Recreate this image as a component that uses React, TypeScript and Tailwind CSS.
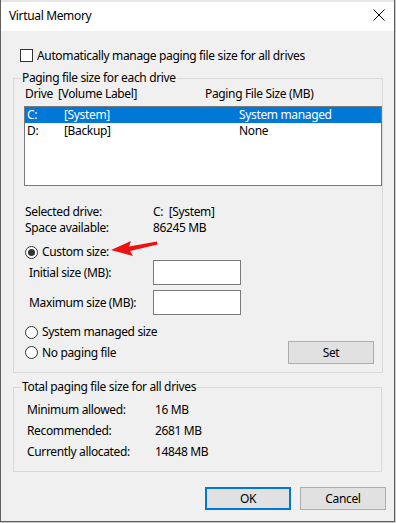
import React from "react";

const font = { fontFamily: '"Noto Sans", "Open Sans", sans-serif' };

function Radio({ checked }: { checked?: boolean }) {
  return (
    <span className="flex h-[13px] w-[13px] shrink-0 items-center justify-center rounded-full border border-[#333333] bg-white">
      {checked && <span className="h-[7px] w-[7px] rounded-full bg-[#333333]" />}
    </span>
  );
}

export default function App() {
  return (
    <div
      className="relative h-[523px] w-[396px] bg-[#c8c8c8] text-[12px] leading-[16px] tracking-[-0.35px] text-black"
      style={font}
    >
      <div className="flex h-[522px] w-[395px] flex-col border-x border-b border-[#5f5f5f] bg-[#f0f0f0]">
        <div className="h-[2px] bg-[#e6e6e6]" />
        {/* title bar */}
        <div className="flex h-[29px] items-center justify-between bg-white pl-[8px] pr-[8px]">
          <span className="mt-[-1px]">Virtual Memory</span>
          <svg width="12" height="12" viewBox="0 0 12 12" className="mr-[1px] mt-[-3px]">
            <path d="M0.5 0.5 L11.5 11.5 M11.5 0.5 L0.5 11.5" stroke="#000" strokeWidth="1" />
          </svg>
        </div>

        {/* checkbox */}
        <div className="ml-[19px] mt-[18px] flex h-[13px] items-center gap-[4px]">
          <span className="h-[13px] w-[13px] border border-[#333333] bg-white" />
          <span>Automatically manage paging file size for all drives</span>
        </div>

        {/* group 1 */}
        <fieldset className="ml-[12px] mt-[8px] w-[369px] border border-[#d9d9d9] pb-[8px]">
          <legend className="ml-[7px] px-[1px] leading-[16px]">Paging file size for each drive</legend>
          <div className="flex h-[16px] pl-[11px]">
            <span className="w-[33px]">Drive</span>
            <span className="w-[147px]">[Volume Label]</span>
            <span>Paging File Size (MB)</span>
          </div>
          <div className="ml-[10px] mt-[4px] h-[80px] w-[358px] border border-[#7a7a7a] bg-white">
            <div className="flex h-[16px] bg-[#0078d7] pl-[2px] text-white">
              <span className="w-[37px]">C:</span>
              <span className="w-[175px]">[System]</span>
              <span>System managed</span>
            </div>
            <div className="flex h-[16px] pl-[2px]">
              <span className="w-[37px]">D:</span>
              <span className="w-[175px]">[Backup]</span>
              <span>None</span>
            </div>
          </div>

          <div className="mt-[18px] flex h-[16px] pl-[11px]">
            <span className="w-[128px]">Selected drive:</span>
            <span>C:&nbsp; [System]</span>
          </div>
          <div className="flex h-[16px] pl-[11px]">
            <span className="w-[128px]">Space available:</span>
            <span>86245 MB</span>
          </div>

          <div className="mt-[8px] flex h-[16px] items-center gap-[4px] pl-[11px]">
            <Radio checked />
            <span>Custom size:</span>
          </div>
          <div className="flex h-[25px] items-center pl-[15px]">
            <span className="w-[124px]">Initial size (MB):</span>
            <span className="h-[25px] w-[88px] border border-[#7a7a7a] bg-white" />
          </div>
          <div className="mt-[5px] flex h-[25px] items-center pl-[15px]">
            <span className="w-[124px]">Maximum size (MB):</span>
            <span className="h-[25px] w-[88px] border border-[#7a7a7a] bg-white" />
          </div>

          <div className="mt-[9px] flex h-[16px] items-center gap-[4px] pl-[11px]">
            <Radio />
            <span>System managed size</span>
          </div>
          <div className="mt-[1px] flex h-[23px] items-center justify-between pl-[11px] pr-[8px]">
            <div className="flex items-center gap-[4px]">
              <Radio />
              <span>No paging file</span>
            </div>
            <button className="flex h-[23px] w-[86px] items-center justify-center border border-[#adadad] bg-[#e1e1e1]">
              Set
            </button>
          </div>
        </fieldset>

        {/* group 2 */}
        <fieldset className="ml-[12px] mt-[6px] w-[369px] border border-[#d9d9d9] pb-[11px]">
          <legend className="ml-[7px] px-[1px] leading-[16px]">Total paging file size for all drives</legend>
          <div className="mt-[7px] flex flex-col gap-[5px] pl-[13px]">
            <div className="flex h-[16px]">
              <span className="w-[128px]">Minimum allowed:</span>
              <span>16 MB</span>
            </div>
            <div className="flex h-[16px]">
              <span className="w-[128px]">Recommended:</span>
              <span>2681 MB</span>
            </div>
            <div className="flex h-[16px]">
              <span className="w-[128px]">Currently allocated:</span>
              <span>14848 MB</span>
            </div>
          </div>
        </fieldset>

        {/* buttons */}
        <div className="mt-[15px] flex justify-end gap-[9px] pr-[8px]">
          <button className="flex h-[23px] w-[86px] items-center justify-center border-2 border-[#0078d7] bg-[#e1e1e1]">
            OK
          </button>
          <button className="flex h-[23px] w-[86px] items-center justify-center border border-[#adadad] bg-[#e1e1e1]">
            Cancel
          </button>
        </div>
      </div>

      {/* red arrow annotation */}
      <svg
        className="pointer-events-none absolute left-0 top-0"
        width="396"
        height="523"
        viewBox="0 0 396 523"
      >
        <polygon points="111,250 131,241 129,246.5 157,241.5 157.5,244.5 130,251 133,256" fill="#ee1111" />
      </svg>
    </div>
  );
}
